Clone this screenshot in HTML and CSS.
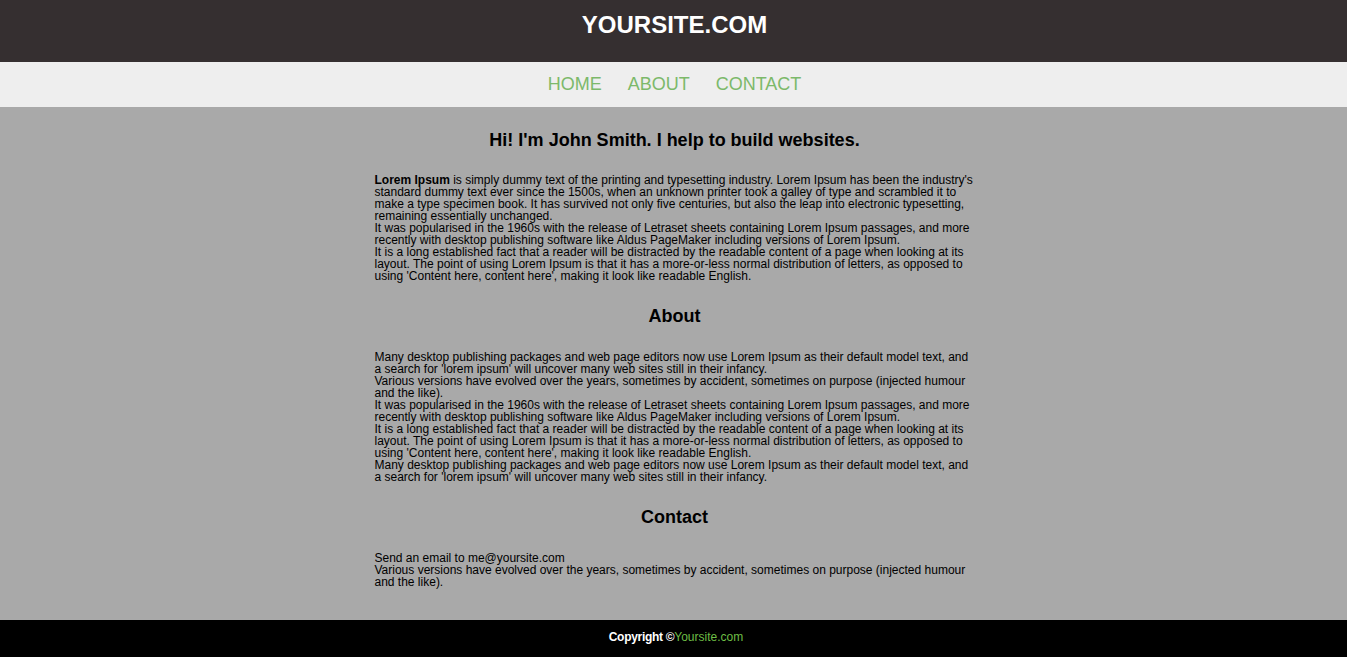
FILE: index.html
```html
<!DOCTYPE html>
<html>
<head>
<meta charset="utf-8">
<title>Yoursite</title>
<link rel="stylesheet" href="styles.css">
</head>
<body>
<header class="site-header">
  <h1 class="logo">YOURSITE.COM</h1>
</header>
<nav class="site-nav">
  <a href="#">HOME</a>
  <a href="#">ABOUT</a>
  <a href="#">CONTACT</a>
</nav>
<main class="main">
  <div class="content">
    <h2 class="title">Hi! I'm John Smith. I help to build websites.</h2>
    <p class="text intro"><b>Lorem Ipsum</b> is simply dummy text of the printing and typesetting industry. Lorem Ipsum has been the industry's standard dummy text ever since the 1500s, when an unknown printer took a galley of type and scrambled it to make a type specimen book. It has survived not only five centuries, but also the leap into electronic typesetting, remaining essentially unchanged.<br>It was popularised in the 1960s with the release of Letraset sheets containing Lorem Ipsum passages, and more recently with desktop publishing software like Aldus PageMaker including versions of Lorem Ipsum.<br>It is a long established fact that a reader will be distracted by the readable content of a page when looking at its layout. The point of using Lorem Ipsum is that it has a more-or-less normal distribution of letters, as opposed to using 'Content here, content here', making it look like readable English.</p>
    <h2 class="title section">About</h2>
    <p class="text">Many desktop publishing packages and web page editors now use Lorem Ipsum as their default model text, and a search for 'lorem ipsum' will uncover many web sites still in their infancy.<br>Various versions have evolved over the years, sometimes by accident, sometimes on purpose (injected humour and the like).<br>It was popularised in the 1960s with the release of Letraset sheets containing Lorem Ipsum passages, and more recently with desktop publishing software like Aldus PageMaker including versions of Lorem Ipsum.<br>It is a long established fact that a reader will be distracted by the readable content of a page when looking at its layout. The point of using Lorem Ipsum is that it has a more-or-less normal distribution of letters, as opposed to using 'Content here, content here', making it look like readable English.<br>Many desktop publishing packages and web page editors now use Lorem Ipsum as their default model text, and a search for 'lorem ipsum' will uncover many web sites still in their infancy.</p>
    <h2 class="title section">Contact</h2>
    <p class="text">Send an email to me@yoursite.com<br>Various versions have evolved over the years, sometimes by accident, sometimes on purpose (injected humour and the like).</p>
  </div>
</main>
<footer class="site-footer">
  <b>Copyright &copy;</b><span class="brand">Yoursite.com</span>
</footer>
</body>
</html>
```

FILE: styles.css
```css
* { box-sizing: border-box; }
html, body { margin: 0; padding: 0; }
body {
  font-family: "Liberation Sans", Arial, sans-serif;
  background: #a9a9a9;
  color: #000;
}
.site-header {
  background: #352f30;
  height: 62px;
  display: flex;
  justify-content: center;
  padding: 11px 0 0 2px;
}
.logo {
  margin: 0;
  color: #fff;
  font-size: 24px;
  font-weight: bold;
  line-height: 28px;
}
.site-nav {
  background: #eeeeee;
  height: 45px;
  display: flex;
  justify-content: center;
  align-items: center;
  gap: 26px;
  padding-left: 2px;
}
.site-nav a {
  color: #7cb96a;
  text-decoration: none;
  font-size: 18px;
}
.main {
  height: 513px;
  padding-top: 21px;
}
.content {
  width: 602px;
  padding-left: 2px;
  margin: 0 auto;
}
.title {
  margin: 0;
  text-align: center;
  font-size: 18px;
  font-weight: bold;
  line-height: 24px;
}
.section { margin-top: 22px; }
.text {
  margin: 23px 0 0;
  font-size: 12px;
  line-height: 12px;
}
.text.intro { margin-top: 22px; }
.site-footer {
  background: #000;
  height: 37px;
  display: flex;
  justify-content: center;
  align-items: center;
  padding: 0 0 4px 5px;
  font-size: 12px;
  color: #fff;
}
.site-footer b { font-weight: bold; letter-spacing: -0.3px; }
.brand { color: #6dbd45; }
```
